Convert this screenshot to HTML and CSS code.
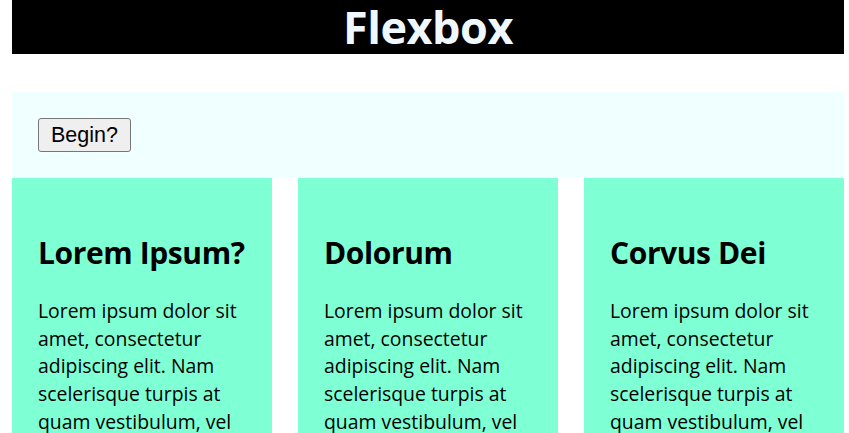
FILE: index.html
```html
<!DOCTYPE html>
<html lang="en">
<head>
<meta charset="utf-8">
<title>Flexbox</title>
<link rel="stylesheet" href="styles.css">
</head>
<body>
<div class="page">
  <header class="masthead">
    <h1 class="title">Flexbox</h1>
  </header>
  <section class="controls">
    <button class="begin" type="button">Begin?</button>
  </section>
  <main class="cards">
    <article class="card">
      <h2 class="card-title">Lorem Ipsum?</h2>
      <p class="card-text">Lorem ipsum dolor sit amet, consectetur adipiscing elit. Nam scelerisque turpis at quam vestibulum, vel facilisis justo sodales. Vivamus id lacus vitae eros.</p>
    </article>
    <article class="card">
      <h2 class="card-title">Dolorum</h2>
      <p class="card-text">Lorem ipsum dolor sit amet, consectetur adipiscing elit. Nam scelerisque turpis at quam vestibulum, vel facilisis justo sodales. Vivamus id lacus vitae eros.</p>
    </article>
    <article class="card">
      <h2 class="card-title">Corvus Dei</h2>
      <p class="card-text">Lorem ipsum dolor sit amet, consectetur adipiscing elit. Nam scelerisque turpis at quam vestibulum, vel facilisis justo sodales. Vivamus id lacus vitae eros.</p>
    </article>
  </main>
</div>
</body>
</html>
```
FILE: styles.css
```css
html, body {
  margin: 0;
  padding: 0;
  background: #ffffff;
}

body {
  font-family: "Open Sans", "Noto Sans", sans-serif;
  color: #000;
}

.page {
  width: 832px;
  margin-left: 12px;
}

.masthead {
  height: 54px;
  background: #000;
  display: flex;
  justify-content: center;
  align-items: center;
  overflow: hidden;
}

.title {
  margin: 0;
  font-size: 45px;
  line-height: 54px;
  font-weight: 700;
  color: #f0f8ff;
  letter-spacing: -0.5px;
}

.controls {
  margin-top: 38px;
  background: #f0ffff;
  padding: 26px;
  display: flex;
}

.begin {
  font-family: "Liberation Sans", Arial, sans-serif;
  font-size: 21.5px;
  line-height: 24px;
  padding: 4px 12px;
  border: 1px solid #767676;
  border-radius: 3px;
  background: #efefef;
  color: #000;
}

.cards {
  display: flex;
  justify-content: space-between;
}

.card {
  width: 260px;
  box-sizing: border-box;
  padding: 26px;
  background: #7fffd4;
}

.card-title {
  margin: 27px 0 24px;
  font-size: 30px;
  line-height: 43px;
  font-weight: 700;
  letter-spacing: -0.4px;
}

.card-text {
  margin: -1px 0 0;
  font-size: 19.4px;
  line-height: 27.7px;
}
```
